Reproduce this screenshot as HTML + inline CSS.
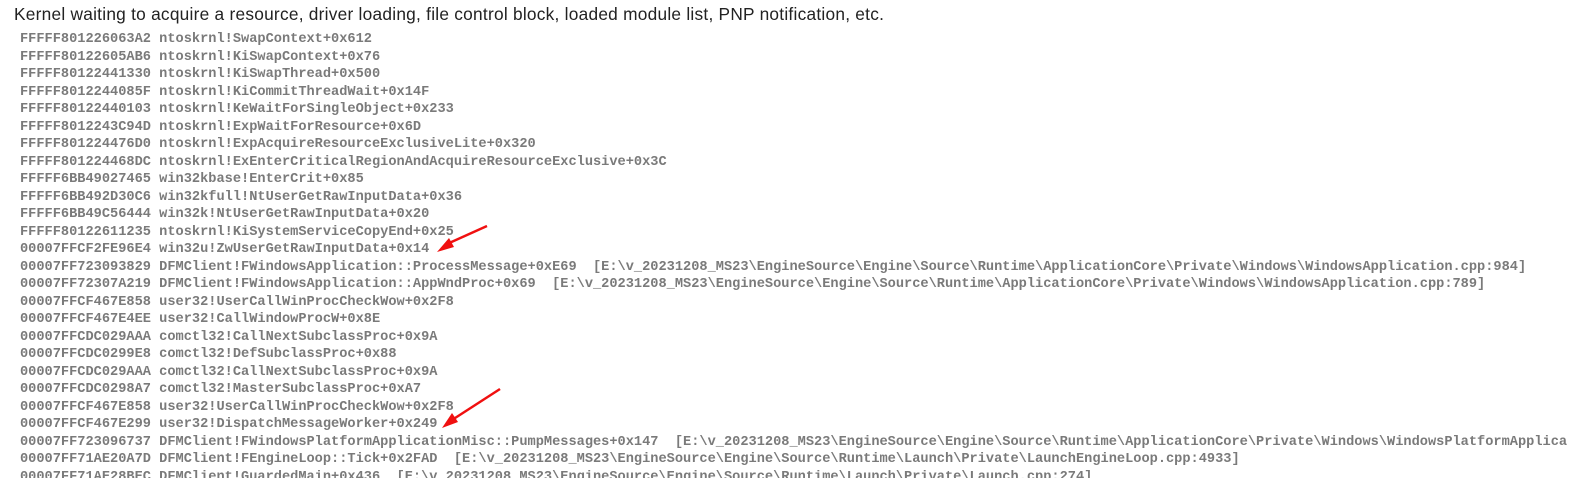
<!DOCTYPE html>
<html><head><meta charset="utf-8"><style>
html,body{margin:0;padding:0;background:#fff;width:1577px;height:478px;overflow:hidden;position:relative}
.h{position:absolute;left:14px;top:4px;font-family:"Liberation Sans",sans-serif;font-size:17.3px;letter-spacing:0.25px;color:#222;white-space:nowrap}
pre{position:absolute;left:20px;top:31px;width:1557px;height:447px;overflow:hidden;margin:0;font-family:"Liberation Mono",monospace;font-weight:bold;font-size:13.65px;line-height:17.5px;color:#7a7a7a;white-space:pre}
svg{position:absolute;left:0;top:0}
</style></head><body>
<div class="h">Kernel waiting to acquire a resource, driver loading, file control block, loaded module list, PNP notification, etc.</div>
<pre>FFFFF801226063A2 ntoskrnl!SwapContext+0x612
FFFFF80122605AB6 ntoskrnl!KiSwapContext+0x76
FFFFF80122441330 ntoskrnl!KiSwapThread+0x500
FFFFF8012244085F ntoskrnl!KiCommitThreadWait+0x14F
FFFFF80122440103 ntoskrnl!KeWaitForSingleObject+0x233
FFFFF8012243C94D ntoskrnl!ExpWaitForResource+0x6D
FFFFF801224476D0 ntoskrnl!ExpAcquireResourceExclusiveLite+0x320
FFFFF801224468DC ntoskrnl!ExEnterCriticalRegionAndAcquireResourceExclusive+0x3C
FFFFF6BB49027465 win32kbase!EnterCrit+0x85
FFFFF6BB492D30C6 win32kfull!NtUserGetRawInputData+0x36
FFFFF6BB49C56444 win32k!NtUserGetRawInputData+0x20
FFFFF80122611235 ntoskrnl!KiSystemServiceCopyEnd+0x25
00007FFCF2FE96E4 win32u!ZwUserGetRawInputData+0x14
00007FF723093829 DFMClient!FWindowsApplication::ProcessMessage+0xE69  [E:\v_20231208_MS23\EngineSource\Engine\Source\Runtime\ApplicationCore\Private\Windows\WindowsApplication.cpp:984]
00007FF72307A219 DFMClient!FWindowsApplication::AppWndProc+0x69  [E:\v_20231208_MS23\EngineSource\Engine\Source\Runtime\ApplicationCore\Private\Windows\WindowsApplication.cpp:789]
00007FFCF467E858 user32!UserCallWinProcCheckWow+0x2F8
00007FFCF467E4EE user32!CallWindowProcW+0x8E
00007FFCDC029AAA comctl32!CallNextSubclassProc+0x9A
00007FFCDC0299E8 comctl32!DefSubclassProc+0x88
00007FFCDC029AAA comctl32!CallNextSubclassProc+0x9A
00007FFCDC0298A7 comctl32!MasterSubclassProc+0xA7
00007FFCF467E858 user32!UserCallWinProcCheckWow+0x2F8
00007FFCF467E299 user32!DispatchMessageWorker+0x249
00007FF723096737 DFMClient!FWindowsPlatformApplicationMisc::PumpMessages+0x147  [E:\v_20231208_MS23\EngineSource\Engine\Source\Runtime\ApplicationCore\Private\Windows\WindowsPlatformApplica
00007FF71AE20A7D DFMClient!FEngineLoop::Tick+0x2FAD  [E:\v_20231208_MS23\EngineSource\Engine\Source\Runtime\Launch\Private\LaunchEngineLoop.cpp:4933]
00007FF71AE28BEC DFMClient!GuardedMain+0x436  [E:\v_20231208_MS23\EngineSource\Engine\Source\Runtime\Launch\Private\Launch.cpp:274]</pre>
<svg width="1577" height="478">
<path d="M487 226 L447 244" stroke="#f01010" stroke-width="2.5" fill="none"/>
<polygon points="437,252 449,238 454,247" fill="#f01010"/>
<path d="M500 389 L452 420" stroke="#f01010" stroke-width="2.5" fill="none"/>
<polygon points="442,428 452,413 458,422" fill="#f01010"/>
</svg>
</body></html>
